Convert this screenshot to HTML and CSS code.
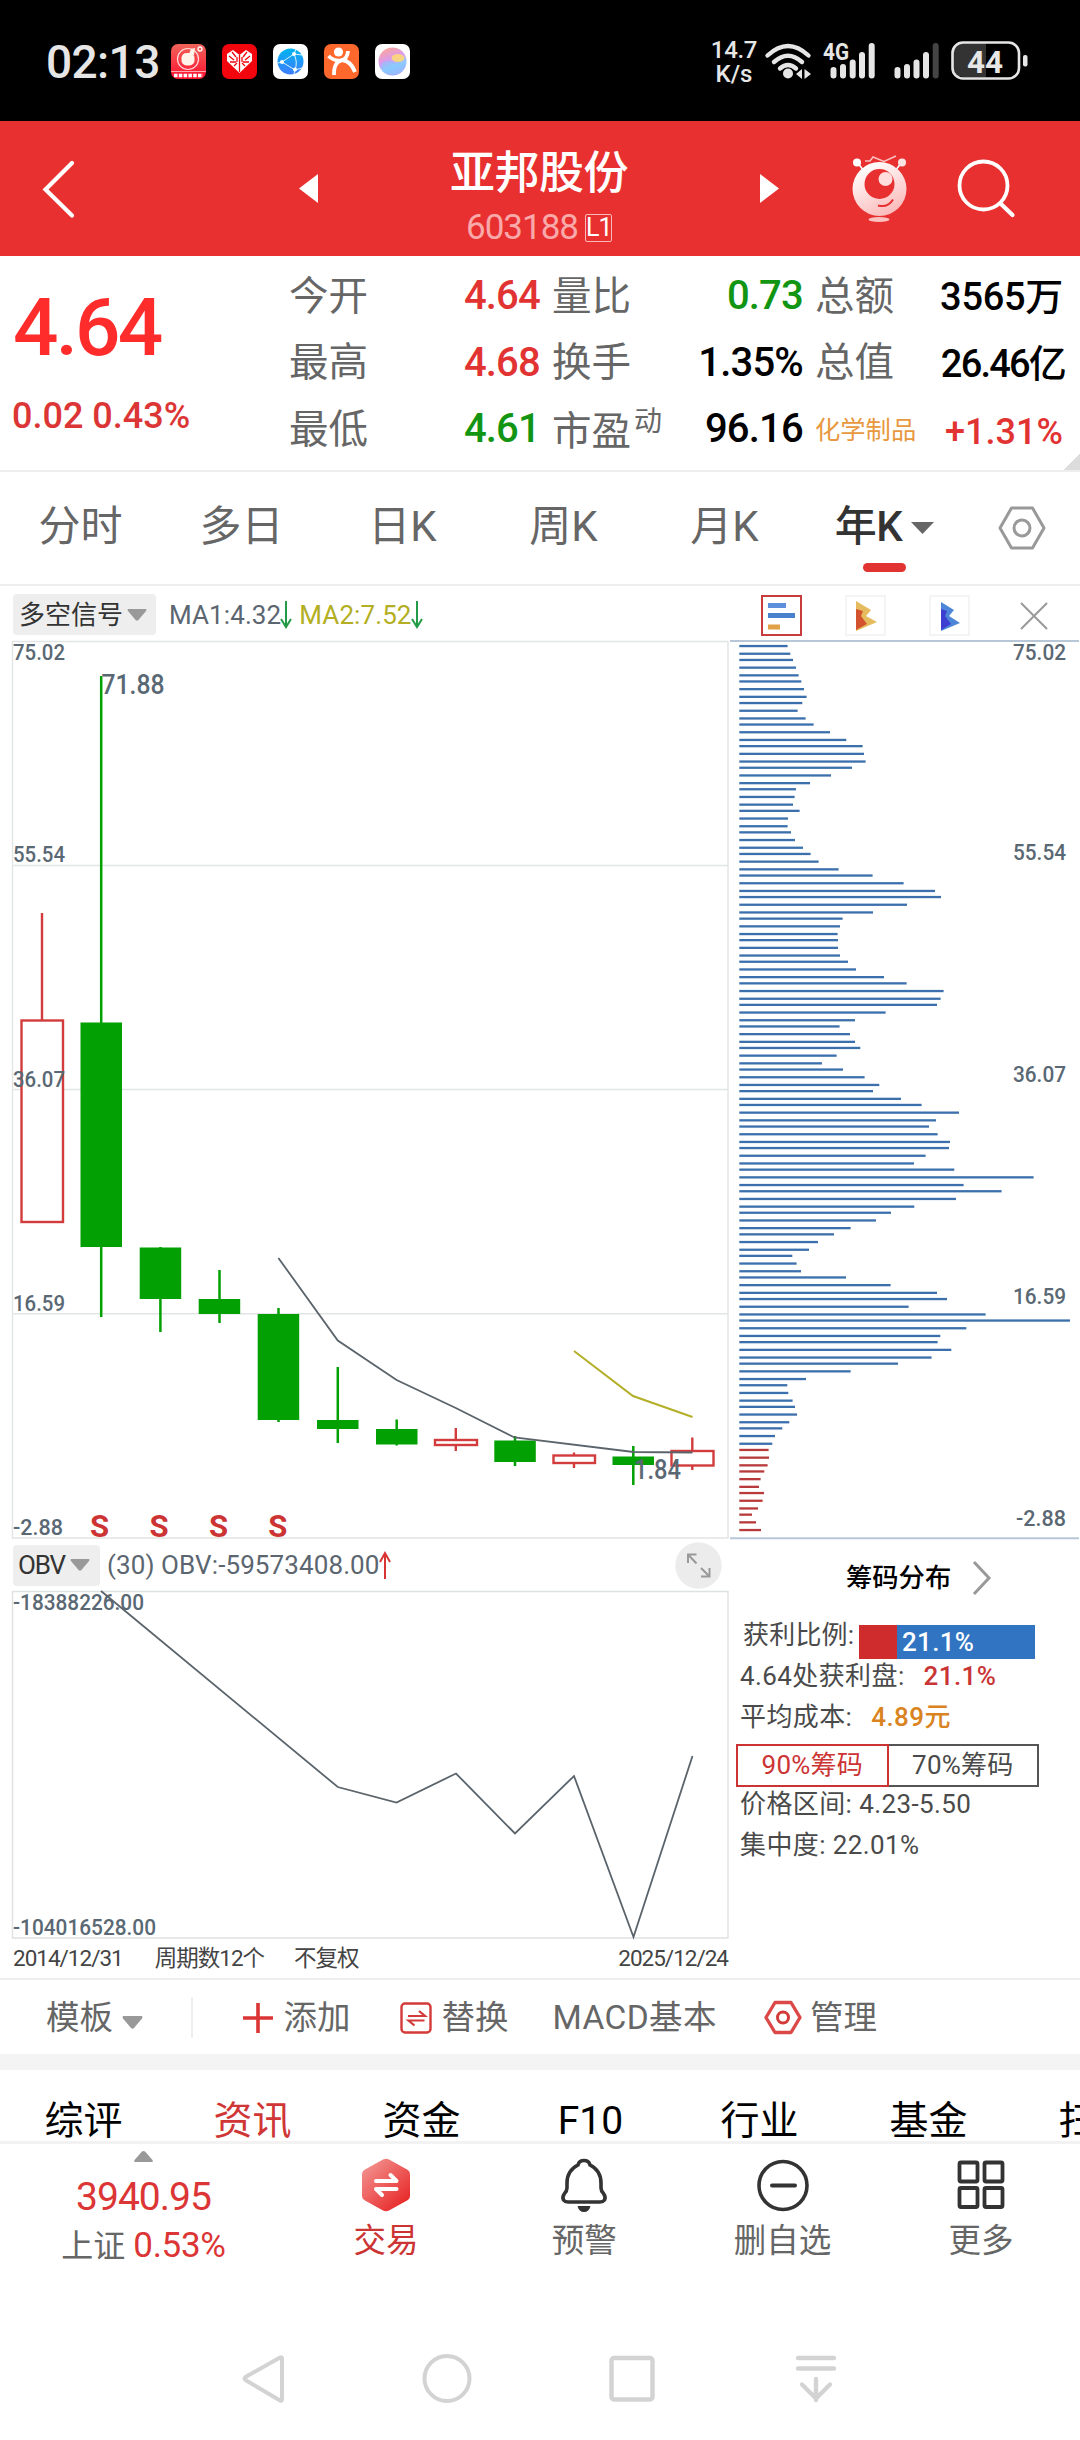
FILE: index.html
```html
<!DOCTYPE html>
<html lang="zh-CN">
<head>
<meta charset="utf-8">
<title>亚邦股份 603188</title>
<link rel="stylesheet" href="styles.css">
</head>
<body>
<div class="screen">
  <header class="status">
    <span class="clock">02:13</span>
    <div class="apps">
      <svg width="35" height="35" viewBox="0 0 35 35"><defs><linearGradient id="ga" x1="0" y1="0" x2="0" y2="1"><stop offset="0" stop-color="#f0635a"/><stop offset="1" stop-color="#ff1230"/></linearGradient></defs><rect width="35" height="35" rx="7" fill="url(#ga)"/><circle cx="17" cy="15" r="10.5" fill="none" stroke="#fff" stroke-width="1.2" opacity=".8"/><rect x="10.500" y="9" width="13" height="12.500" rx="5" fill="#fff3ea"/><path d="M18 10l2-5 4-1-1 7z" fill="#fff3ea"/><circle cx="29" cy="5" r="2" fill="none" stroke="#fff" stroke-width="1.300"/><path d="M0 27.500h35" stroke="#fff" opacity=".6"/><path d="M3 31.500h29" stroke="#fff" stroke-width="3.400" stroke-dasharray="3.500 1.300"/></svg>
      <svg width="35" height="35" viewBox="0 0 35 35"><rect width="35" height="35" rx="7" fill="#f2050d"/><path d="M17.500 29L5 17V10l6-4 6.500 5L24 6l6 4v7z" fill="#fff"/><path d="M17.500 11v17M7 12l5 4M28 12l-5 4M10 8l4 5M25 8l-4 5M8 18l6 0M27 18h-6M12 22l3-3M23 22l-3-3M15 13v5M20 13v5" stroke="#f2050d" stroke-width="1.300"/></svg>
      <svg width="35" height="35" viewBox="0 0 35 35"><defs><linearGradient id="gb" x1="0" y1="0" x2="0" y2="1"><stop offset="0" stop-color="#00b4ef"/><stop offset="1" stop-color="#3f7dff"/></linearGradient></defs><rect width="35" height="35" rx="7" fill="#fff"/><circle cx="17.500" cy="17.500" r="13" fill="url(#gb)"/><path d="M21 10L9 18l13 8M21 10q4 8 1 16M21 10l2-5M21 10l8 1M9 18l-4 1M22 26l-1 4M22 26l7-2" stroke="#d6f4ff" fill="none"/><g fill="#fff"><circle cx="21" cy="10" r="2"/><circle cx="9" cy="18" r="2"/><circle cx="22" cy="25.500" r="2"/></g></svg>
      <svg width="35" height="35" viewBox="0 0 35 35"><rect width="35" height="35" rx="7" fill="#ff682c"/><circle cx="14.500" cy="8" r="4.600" fill="#fff"/><path d="M4.500 12q5 5 12 4.500 7-1 7.500-9.500M10 31q-.5-9 4-13l4-2q9 1 13 12" fill="none" stroke="#fff" stroke-width="3.800"/></svg>
      <svg width="35" height="35" viewBox="0 0 35 35"><defs><linearGradient id="gc" x1=".2" y1="0" x2=".6" y2="1"><stop offset="0" stop-color="#ffa892"/><stop offset=".45" stop-color="#d99af0"/><stop offset=".7" stop-color="#8ecbff"/><stop offset="1" stop-color="#b0a8ff"/></linearGradient></defs><rect width="35" height="35" rx="7" fill="#fff"/><circle cx="17.500" cy="17.500" r="14" fill="url(#gc)"/><ellipse cx="23" cy="14" rx="6.500" ry="4" fill="#ffdc6e" opacity=".85"/><path d="M6 20q6-6 13-1 6 3 11 0-1 11-12 12Q9 30 6 20z" fill="#83c9fb" opacity=".5"/></svg>
    </div>
    <div class="signals">
      <div class="speed"><span>14.7</span><span>K/s</span></div>
      <svg class="radio" width="320" height="50" viewBox="760 36 320 50">
        <g fill="none" stroke="#e6e6e6" stroke-width="4.400" stroke-linecap="round"><path d="M767.500 55.500q20.500-19 41 0M774 62q14-12.500 28 0M780 68.500q8-7 16 0"/></g>
        <circle cx="788" cy="73.500" r="5" fill="#e6e6e6"/><path d="M796 74l6-5v10zM804.500 69l6.500 5-6.500 5z" fill="#e6e6e6"/>
        <text class="net" x="823" y="60" textLength="26" lengthAdjust="spacingAndGlyphs">4G</text>
        <path d="M833.500 70v5.500M843 67v8.500M852.700 62.500v13M862 55v20.500M871.700 46v29.500M897.500 70v5.500M907 67v8.500M916.500 62.500v13M926 55v20.500" stroke="#e6e6e6" stroke-width="6" stroke-linecap="round"/>
        <path d="M935.700 46v29.500" stroke="#444" stroke-width="6" stroke-linecap="round"/>
        <path d="M986 43h-23a10 10 0 0 0-10 10v14a10 10 0 0 0 10 10h23z" fill="#333"/>
        <rect x="952.500" y="42.500" width="66.500" height="36" rx="10.500" fill="none" stroke="#e6e6e6" stroke-width="2.600"/>
        <rect x="1023" y="55" width="4.500" height="11.500" rx="2" fill="#e6e6e6"/>
        <text class="level" x="967" y="72.500" textLength="36" lengthAdjust="spacingAndGlyphs">44</text>
      </svg>
    </div>
  </header>

  <div class="titlebar">
    <svg class="back" width="32" height="60" viewBox="0 0 32 60"><path d="M29 4L2.500 30.500 29 56.500" fill="none" stroke="#fff" stroke-width="4.200" stroke-linecap="round"/></svg>
    <svg class="prev" width="19" height="29" viewBox="0 0 19 29"><path d="M19 0v29L0 14.500z" fill="#fff"/></svg>
    <div class="stock">
      <h1>亚邦股份</h1>
      <div class="code"><span>603188</span><i>L1</i></div>
    </div>
    <svg class="next" width="19" height="29" viewBox="0 0 19 29"><path d="M0 0v29l19-14.500z" fill="#fff"/></svg>
    <svg class="mascot" width="56" height="70" viewBox="852 154 56 70"><defs><linearGradient id="gm" x1=".3" y1="0" x2=".8" y2="1"><stop offset="0" stop-color="#fff"/><stop offset="1" stop-color="#fbb5b5"/></linearGradient></defs><path d="M865 161h5l3-4 11 4.500 12-5.500" fill="none" stroke="#fbc0c0" stroke-width="1.500"/><path d="M857 162l7 9M902 162l-7 9" stroke="#fff" stroke-width="1.600"/><circle cx="857" cy="162.500" r="4" fill="#fff"/><circle cx="902" cy="162.500" r="4" fill="#fde4e4"/><circle cx="879.500" cy="189" r="27" fill="url(#gm)"/><circle cx="879.500" cy="184" r="15" fill="#e83030"/><circle cx="885.500" cy="179" r="7" fill="#fdd"/><path d="M878 205.500q10 2.500 15-6" fill="none" stroke="#e83030" stroke-width="2"/><ellipse cx="879" cy="219.500" rx="10.500" ry="2.600" fill="#fbc0c0"/></svg>
    <svg class="search" width="60" height="62" viewBox="956 158 60 62"><circle cx="983.500" cy="185.500" r="24" fill="none" stroke="#fff" stroke-width="3.800"/><path d="M1000.500 203.500l12 11.500" stroke="#fff" stroke-width="4.200" stroke-linecap="round"/></svg>
  </div>

  <section class="quote">
    <div class="last">
      <div class="price">4.64</div>
      <div class="change">0.02 0.43%</div>
    </div>
    <dl class="facts">
      <div><dt>今开</dt><dd class="up">4.64</dd></div>
      <div><dt>最高</dt><dd class="up">4.68</dd></div>
      <div><dt>最低</dt><dd class="down">4.61</dd></div>
    </dl>
    <dl class="facts">
      <div><dt>量比</dt><dd class="down">0.73</dd></div>
      <div><dt>换手</dt><dd>1.35%</dd></div>
      <div><dt>市盈<sup>动</sup></dt><dd>96.16</dd></div>
    </dl>
    <dl class="facts amounts">
      <div><dt>总额</dt><dd>3565万</dd></div>
      <div><dt>总值</dt><dd class="cap">26.46亿</dd></div>
      <div><dt class="sector">化学制品</dt><dd class="up small">+1.31%</dd></div>
    </dl>
    <div class="corner"></div>
  </section>

  <nav class="periods">
    <span>分时</span><span>多日</span><span>日K</span><span>周K</span><span>月K</span>
    <span class="on">年K<svg width="23" height="12" viewBox="0 0 23 12"><path d="M0 0h23L11.500 12z" fill="#666"/></svg></span>
    <svg class="gear" width="48" height="44" viewBox="0 0 48 44"><path d="M13.500 2h21L46 22 34.500 42h-21L2 22z" fill="none" stroke="#999" stroke-width="3" stroke-linejoin="round"/><circle cx="24" cy="22" r="8" fill="none" stroke="#999" stroke-width="3"/></svg>
  </nav>

  <div class="signalbar">
    <span class="pick">多空信号<svg width="20" height="12" viewBox="0 0 20 12"><path d="M1 0h18q1 1 0 2l-8 9.500h-2L1 2Q0 1 1 0z" fill="#999"/></svg></span>
    <span class="ma one">MA1:4.32</span><svg class="dn" width="12" height="27" viewBox="0 0 12 27"><path d="M6 0v26M1 18l5 8 5-8" fill="none" stroke="#239a46" stroke-width="2"/></svg>
    <span class="ma two">MA2:7.52</span><svg class="dn" width="12" height="27" viewBox="0 0 12 27"><path d="M6 0v26M1 18l5 8 5-8" fill="none" stroke="#239a46" stroke-width="2"/></svg>
    <div class="modes">
      <svg width="41" height="41" viewBox="0 0 41 41"><rect x="1" y="1" width="39" height="39" fill="#fff" stroke="#c93c3c" stroke-width="2"/><path d="M7 10.500h18" stroke="#5d8fdc" stroke-width="5"/><path d="M7 20.500h27" stroke="#4a80cc" stroke-width="5"/><path d="M7 32h12" stroke="#e0a046" stroke-width="5"/></svg>
      <svg width="41" height="41" viewBox="0 0 41 41"><rect x="1" y="1" width="39" height="39" fill="#fff" stroke="#f4f4f4" stroke-width="2"/><path d="M11 6l15 9-5 6 11 6-21 9z" fill="#e5bb5d"/><path d="M11 14l7 2-2 5 6 8-11 6z" fill="#d3532f"/></svg>
      <svg width="41" height="41" viewBox="0 0 41 41"><rect x="1" y="1" width="39" height="39" fill="#fff" stroke="#f4f4f4" stroke-width="2"/><path d="M12 7l13 8-5 6 11 7-19 8z" fill="#4d86d9"/><path d="M12 14l6 2-2 5 6 8-10 6z" fill="#3d3fd0"/></svg>
      <svg class="close" width="30" height="28" viewBox="0 0 30 28"><path d="M2 1l26 26M28 1L2 27" stroke="#999" stroke-width="2"/></svg>
    </div>
  </div>

  <main class="charts">
    <div class="left">
      <svg class="kline" width="729" height="900" viewBox="0 640 729 900">
        <path d="M12.500 641.500H728V1538H12.500zM12.500 865.500H728M12.500 1089.500H728M12.500 1313.700H728" fill="none" stroke="#e2e5e5" stroke-width="1.400"/>
        <g stroke="#d23c3c" stroke-width="2.400" fill="#fff">
          <path d="M42 913v108M455.800 1428v23M574 1452.500v15.500M692.300 1437.500v32.500"/>
          <rect x="21.500" y="1020.500" width="41.500" height="201.500"/><rect x="435" y="1440" width="42" height="5"/><rect x="553.500" y="1455.500" width="41.500" height="7.500"/><rect x="671.500" y="1451" width="42" height="14.500"/>
        </g>
        <path d="M101.200 676v641M160.400 1247v85M219.500 1270v53M278.500 1308v114M337.800 1367v76M396.700 1419.500v26M515 1436v30M633.300 1446v39" stroke="#02a002" stroke-width="2.500"/>
        <path d="M80.500 1022.500H122v224.500H80.500zM139.700 1247.500h41.500v51.500h-41.500zM198.700 1299h41.500v15h-41.500zM257.700 1314h41.500v106h-41.500zM317 1420h41.500v9H317zM376 1429h41.500v15.500H376zM494.300 1440.500h41.500v21.500h-41.500zM612.500 1456.500H654v8.500h-41.500z" fill="#02a002"/>
        <path d="M278.400 1258l59.400 82.500 58.800 39.500 59.200 28 58.700 29.500 119 14.500 59 .5" fill="none" stroke="#5b646b" stroke-width="1.800"/>
        <path d="M574 1351l59 45 59.500 21" fill="none" stroke="#b4af28" stroke-width="2"/>
        <g class="tick">
          <text x="13" y="660" textLength="52" lengthAdjust="spacingAndGlyphs">75.02</text><text x="13" y="861.500" textLength="52" lengthAdjust="spacingAndGlyphs">55.54</text><text x="13" y="1086.500" textLength="52" lengthAdjust="spacingAndGlyphs">36.07</text><text x="13" y="1311" textLength="52" lengthAdjust="spacingAndGlyphs">16.59</text><text x="13" y="1535" textLength="50" lengthAdjust="spacingAndGlyphs">-2.88</text>
        </g>
        <g class="mark"><text x="101.500" y="694" textLength="63" lengthAdjust="spacingAndGlyphs">71.88</text><text x="634" y="1479" textLength="47" lengthAdjust="spacingAndGlyphs">1.84</text></g>
        <g class="sell"><text x="99.600" y="1536.500">S</text><text x="159" y="1536.500">S</text><text x="218.600" y="1536.500">S</text><text x="277.800" y="1536.500">S</text></g>
      </svg>
      <div class="obvbar">
        <span class="pick">OBV<svg width="20" height="12" viewBox="0 0 20 12"><path d="M1 0h18q1 1 0 2l-8 9.500h-2L1 2Q0 1 1 0z" fill="#999"/></svg></span>
        <span class="ma one">(30) OBV:-59573408.00</span><svg class="dn" width="12" height="27" viewBox="0 0 12 27"><path d="M6 27V1M1 10l5-9 5 9" fill="none" stroke="#d93434" stroke-width="2"/></svg>
        <svg class="expand" width="47" height="47" viewBox="0 0 47 47"><circle cx="23.500" cy="23.500" r="23.200" fill="#ececec"/><path d="M13 21v-8.500h8.500M13 12.500l8.500 9M34.500 26v8.500H26M34.500 34.500L26 26" fill="none" stroke="#999" stroke-width="2"/></svg>
      </div>
      <svg class="obv" width="729" height="349" viewBox="0 1590 729 349">
        <path d="M12.500 1591.500H728V1938H12.500z" fill="none" stroke="#dfe2e2" stroke-width="1.400"/>
        <g class="tick"><text x="13" y="1610" textLength="131" lengthAdjust="spacingAndGlyphs">-18388226.00</text><text x="13" y="1935" textLength="143" lengthAdjust="spacingAndGlyphs">-104016528.00</text></g>
        <path d="M101 1591l236.800 196 58.700 15.500 59.500-29 59 60 59-57.500 59.500 161L692.500 1756" fill="none" stroke="#5b646b" stroke-width="1.800"/>
      </svg>
      <div class="range"><span>2014/12/31</span><span class="cycles">周期数12个</span><span class="adj">不复权</span><span class="end">2025/12/24</span></div>
    </div>
    <div class="right">
      <svg class="chips" width="351" height="900" viewBox="729 640 351 900">
        <path d="M730 641h349M730 1538.300h349" stroke="#b8c7d8" stroke-width="2"/>
        <g id="bars"></g>
        <g class="tick"><text x="1013" y="660" textLength="53" lengthAdjust="spacingAndGlyphs">75.02</text><text x="1013" y="860" textLength="53" lengthAdjust="spacingAndGlyphs">55.54</text><text x="1013" y="1081.500" textLength="53" lengthAdjust="spacingAndGlyphs">36.07</text><text x="1013" y="1303.500" textLength="53" lengthAdjust="spacingAndGlyphs">16.59</text><text x="1016" y="1525.500" textLength="50" lengthAdjust="spacingAndGlyphs">-2.88</text></g>
      </svg>
      <div class="dist">
        <h2>筹码分布<svg width="19" height="34" viewBox="0 0 19 34"><path d="M2 1l15 16L2 33" fill="none" stroke="#999" stroke-width="3"/></svg></h2>
        <div class="ratio"><span>获利比例:</span><b><i></i>21.1%</b></div>
        <p>4.64处获利盘:<em class="red">21.1%</em></p>
        <p>平均成本:<em class="gold">4.89元</em></p>
        <div class="toggle"><span class="sel">90%筹码</span><span>70%筹码</span></div>
        <p class="tight">价格区间: 4.23-5.50</p>
        <p>集中度: 22.01%</p>
      </div>
    </div>
  </main>

  <div class="tools">
    <span class="tpl">模板<svg width="21" height="13" viewBox="0 0 21 13"><path d="M1 0h19q1 1 0 2.500L12 12q-1.500 1.500-3 0L1 2.500Q0 1 1 0z" fill="#999"/></svg></span>
    <span class="sep"></span>
    <span class="tool t1"><svg width="32" height="32" viewBox="0 0 32 32"><path d="M16 1v30M1 16h30" stroke="#dc3535" stroke-width="3.600"/></svg>添加</span>
    <span class="tool t2"><svg width="32" height="32" viewBox="0 0 32 32"><rect x="1.500" y="1.500" width="29" height="29" rx="3.500" fill="none" stroke="#d33a3a" stroke-width="2.400"/><path d="M8 14h17l-6-5M24.500 18.500h-16l6 5" fill="none" stroke="#d33a3a" stroke-width="2.200"/></svg>替换</span>
    <span class="tool t3">MACD基本</span>
    <span class="tool t4"><svg width="38" height="35" viewBox="0 0 38 35"><path d="M11 2.500h16l9 15-9 15H11l-9-15z" fill="none" stroke="#dc4848" stroke-width="3.400" stroke-linejoin="round"/><circle cx="19" cy="17.500" r="5.500" fill="none" stroke="#d33a3a" stroke-width="3"/></svg>管理</span>
  </div>

  <nav class="topics"><span>综评</span><span class="on">资讯</span><span>资金</span><span>F10</span><span>行业</span><span>基金</span><span>扫雷</span></nav>

  <footer class="actions">
    <div class="index">
      <svg width="19" height="11" viewBox="0 0 19 11"><path d="M9.500 0q1 0 2 1l7 8q1 2-1 2h-16q-2 0-1-2l7-8q1-1 2-1z" fill="#999"/></svg>
      <strong>3940.95</strong>
      <p>上证 <em>0.53%</em></p>
    </div>
    <div class="act trade"><svg width="54" height="54" viewBox="0 0 54 54"><defs><linearGradient id="gt" x1=".1" y1=".1" x2=".8" y2=".9"><stop offset="0" stop-color="#f2908d"/><stop offset="1" stop-color="#e82c2c"/></linearGradient></defs><path d="M24 1.500q3-1.500 6 0l18 10q3 1.700 3 5v21q0 3.300-3 5l-18 10q-3 1.500-6 0l-18-10q-3-1.700-3-5v-21q0-3.300 3-5z" fill="url(#gt)"/><path d="M17 23h20.500l-6-6M37.500 31H17l6 6" fill="none" stroke="#fff" stroke-width="4" stroke-linecap="round" stroke-linejoin="round"/></svg><span>交易</span></div>
    <div class="act"><svg width="54" height="54" viewBox="0 0 54 54"><path d="M27 2.500q-5 0-6 4.500C13 11 10 18 10 25v5q0 3-2.500 5.500Q5 39 6.500 42q1.500 2 4.500 2h32q3 0 4.500-2 1.500-3-1-6.500Q44 33 44 30v-5c0-7-3-14-11-18q-1-4.500-6-4.500z" fill="none" stroke="#333" stroke-width="3.600"/><path d="M20.500 48h13q-1.500 6-6.500 6t-6.500-6z" fill="#333"/></svg><span>预警</span></div>
    <div class="act"><svg width="54" height="54" viewBox="0 0 54 54"><circle cx="27" cy="27.500" r="24" fill="none" stroke="#333" stroke-width="3.600"/><path d="M16 27.500h23" stroke="#333" stroke-width="4" stroke-linecap="round"/></svg><span>删自选</span></div>
    <div class="act"><svg width="54" height="54" viewBox="0 0 54 54"><g fill="none" stroke="#333" stroke-width="3.800"><rect x="5.500" y="4.500" width="18" height="19" rx="1.500"/><rect x="30.500" y="4.500" width="18" height="19" rx="1.500"/><rect x="5.500" y="30" width="18" height="19" rx="1.500"/><rect x="30.500" y="30" width="18" height="19" rx="1.500"/></g></svg><span>更多</span></div>
  </footer>

  <div class="sysnav">
    <svg width="44" height="52" viewBox="0 0 44 52"><path d="M39 4.500q2-1 2 1.500v40q0 2.500-2 1.500L4.500 27q-2-1.500 0-3z" fill="none" stroke="#d3d3d3" stroke-width="4"/></svg>
    <svg width="50" height="52" viewBox="0 0 50 52"><circle cx="25" cy="25.500" r="22.500" fill="none" stroke="#d3d3d3" stroke-width="4"/></svg>
    <svg width="46" height="52" viewBox="0 0 46 52"><rect x="2.500" y="5" width="41" height="41.500" rx="2.500" fill="none" stroke="#d3d3d3" stroke-width="4.400"/></svg>
    <svg width="42" height="52" viewBox="0 0 42 52"><path d="M3 5h36M3 15.500h36M21 26v21M7 31.500l14 14 14-14" fill="none" stroke="#d3d3d3" stroke-width="4.400" stroke-linecap="round"/></svg>
  </div>
</div>
<script src="chips.js"></script>
</body>
</html>
```
FILE: styles.css
```css
* { box-sizing: border-box; margin: 0; padding: 0; }
body { background: #fff; }
svg { display: block; flex: none; overflow: visible; }
em, i { font-style: normal; }
.screen {
  width: 1080px; height: 2440px; overflow: hidden; background: #fff;
  display: flex; flex-direction: column;
  font-family: Roboto, "Noto Sans CJK SC", sans-serif; color: #000; white-space: nowrap;
}
.screen > * { flex: none; }

.status { height: 121px; background: #000; color: #e6e6e6; display: flex; align-items: center; padding-left: 46px; }
.clock { width: 125px; font-size: 46px; line-height: 50px; font-weight: 500; letter-spacing: -.6px; padding-top: 3px; }
.apps { display: flex; gap: 16px; padding-top: 2px; }
.signals { margin-left: auto; display: flex; align-items: center; }
.speed { width: 52px; display: flex; flex-direction: column; align-items: center; font-size: 24px; line-height: 24px; font-weight: 500; padding-top: 3px; }
.speed span:first-child { letter-spacing: -.3px; }
.radio { margin-top: 1px; }
.radio text { fill: #e6e6e6; font-weight: 700; }
.radio .net { font-size: 24px; }
.radio .level { font-size: 32px; }

.titlebar { height: 135px; background: #e83030; display: flex; align-items: center; }
.back { margin-left: 43px; }
.prev { margin-left: 224px; }
.stock { width: 442px; display: flex; flex-direction: column; align-items: center; color: #fff; padding-top: 14px; }
.stock h1 { font-size: 45px; line-height: 52px; font-weight: 500; letter-spacing: -.5px; }
.code { display: flex; align-items: center; gap: 7px; height: 30px; margin-top: 13px; font-size: 35px; line-height: 30px; color: #f9a9a9; }
.code span { letter-spacing: -1px; }
.code i { width: 27px; height: 28px; border: 1.5px solid #f9b9b9; border-radius: 2px; color: #fff; font-size: 25px; line-height: 26px; text-align: center; letter-spacing: -1px; }
.mascot { margin-left: 73px; }
.search { margin-left: 48px; }

.quote { position: relative; height: 216px; border-bottom: 2px solid #eee; display: flex; }
.last { width: 289px; padding: 30px 0 0 12px; }
.price { font-size: 80px; line-height: 84px; font-weight: 500; color: #ff2c2c; letter-spacing: -2.8px; padding-left: 1px; }
.change { font-size: 36px; line-height: 40px; margin-top: 26px; color: #dc3535; font-weight: 500; }
.facts { width: 263px; padding: 7px 12px 0 0; }
.facts div { display: flex; justify-content: space-between; align-items: center; height: 66.6px; }
.facts dt { font-size: 39.5px; line-height: 40px; color: #666; padding-top: 1px; }
.facts dd { font-size: 40px; line-height: 40px; font-weight: 500; letter-spacing: -.8px; }
.facts sup { font-size: 28px; line-height: 28px; vertical-align: 14px; margin-left: 3px; }
.amounts { width: 248px; padding-right: 0; }
.amounts dd { font-size: 38px; padding-top: 2px; letter-spacing: -.3px; }
.amounts dd.cap { letter-spacing: -1.8px; margin-right: -2px; }
.amounts dt.sector { font-size: 25.3px; color: #e8983f; padding-top: 4px; }
.amounts dd.small { font-size: 36px; padding-top: 6px; letter-spacing: 0; }
.up { color: #e23333; }
.down { color: #129512; }
.corner { position: absolute; right: 0; bottom: 0; width: 17px; height: 17px; background: linear-gradient(135deg, transparent 50%, #dcdcdc 50%); }

.periods { height: 114px; border-bottom: 2px solid #eee; display: flex; align-items: center; font-size: 42px; line-height: 50px; color: #666; padding-bottom: 3px; }
.periods span { width: 161px; text-align: center; }
.periods .on { position: relative; display: flex; align-items: center; justify-content: center; gap: 9px; color: #333; font-weight: 500; letter-spacing: -.5px; padding-right: 2px; }
.periods .on svg { margin-top: 3px; }
.periods .on::after { content: ""; position: absolute; left: 58px; top: 61px; width: 43px; height: 9px; border-radius: 5px; background: #e23333; }
.gear { margin: 3px 0 0 32px; }

.signalbar { height: 54px; display: flex; align-items: center; padding-left: 13px; padding-top: 3px; }
.pick { height: 41px; display: flex; align-items: center; gap: 4px; background: #eee; border-radius: 4px; color: #333; font-size: 26px; line-height: 40px; padding-left: 6px; }
.signalbar .pick { width: 143px; margin-right: 13px; }
.ma { font-size: 26px; line-height: 40px; letter-spacing: .1px; }
.one { color: #5b6670; }
.two { color: #b3ae22; margin-left: 7px; }
.dn { margin-left: -1px; }
.modes { margin-left: auto; display: flex; align-items: center; width: 319px; gap: 43px; padding-top: 2px; }
.close { margin-left: 6px; }

.charts { height: 1340px; border-bottom: 2px solid #eee; display: flex; }
.left { width: 729px; }
.right { width: 351px; }
.tick text { font-size: 22.5px; fill: #5a6874; font-weight: 500; }
.mark text { font-size: 27px; fill: #5a6874; font-weight: 500; }
.sell text { font-size: 31px; font-weight: 700; fill: #cc3434; text-anchor: middle; }
.obvbar { height: 50px; display: flex; align-items: center; padding: 0 7px 0 13px; }
.obvbar .pick { width: 87px; margin-right: 7px; letter-spacing: -1.2px; gap: 5px; padding-left: 5px; }
.obvbar .ma { letter-spacing: .1px; }
.expand { margin-left: auto; }
.range { height: 37px; display: flex; align-items: center; padding: 0 1px 0 13px; font-size: 22.500px; line-height: 30px; color: #444; letter-spacing: -1px; }
.cycles { margin-left: 32px; }
.adj { margin-left: 30px; }
.range .end { margin-left: auto; }

.dist { font-size: 26px; color: #4a4a4a; padding-left: 11px; }
.dist h2 { height: 76px; display: flex; align-items: center; gap: 21px; margin-left: 106px; font-size: 26.3px; line-height: 40px; font-weight: 500; color: #000; }
.ratio { height: 43px; display: flex; align-items: flex-end; line-height: 34px; }
.ratio span { width: 119px; padding-left: 3px; line-height: 48px; letter-spacing: .2px; }
.ratio b { width: 176px; height: 34px; display: flex; align-items: center; background: #3074c2; color: #fff; font-weight: 500; line-height: 26px; letter-spacing: .3px; }
.ratio i { width: 38px; height: 34px; background: #cf2d2d; margin-right: 5px; }
.dist p { height: 41px; line-height: 41px; letter-spacing: .4px; }
.ratio + p { margin-top: -3px; }
.dist em { margin-left: 19px; font-weight: 500; }
.dist .gold { color: #d98420; }
.dist .red { color: #c93434; }
.toggle { display: flex; width: 303px; height: 43px; margin: 6px 0 0 -4px; }
.toggle span { flex: 1; border: 2px solid #555; border-left: 0; text-align: center; line-height: 38px; letter-spacing: .2px; }
.toggle .sel { border: 2px solid #cc3434; color: #cc3434; }
.dist .tight { margin-top: -3px; }

.tools { height: 74px; display: flex; align-items: center; font-size: 33.500px; line-height: 40px; color: #666; padding-left: 46px; padding-top: 1px; }
.tpl { width: 145px; display: flex; align-items: center; gap: 9px; }
.tpl svg { margin-top: 9px; }
.sep { width: 1.500px; height: 41px; background: #eee; }
.tool { display: flex; align-items: center; gap: 10px; }
.t1 { margin-left: 49px; } .t2 { margin-left: 49px; } .t3 { margin-left: 44px; letter-spacing: .4px; } .t4 { margin-left: 47px; gap: 8px; }

.topics { height: 87px; border-top: 16px solid #f4f4f4; overflow: hidden; display: flex; font-size: 39px; line-height: 40px; padding: 31px 0 0 0; }
.topics span { flex: none; width: 169px; text-align: center; text-indent: -2px; }
.topics .on { color: #d03636; }

.actions { height: 160px; border-top: 3px solid #f2f2f2; display: flex; padding-top: 7px; }
.index { width: 287px; display: flex; flex-direction: column; align-items: center; }
.index strong { font-size: 39px; line-height: 44px; font-weight: 400; color: #dc3535; margin-top: 13px; letter-spacing: -1px; }
.index p { font-size: 32px; line-height: 44px; color: #666; margin-top: 5px; }
.index em { color: #dc3535; font-size: 35px; letter-spacing: -.3px; }
.act { width: 198.300px; display: flex; flex-direction: column; align-items: center; padding-top: 7px; font-size: 32.500px; line-height: 40px; color: #666; }
.act span { margin-top: 9px; }
.trade { color: #cc3434; }

.sysnav { display: flex; padding: 52px 0 0 241px; }
.sysnav svg:nth-child(2) { margin-left: 137px; }
.sysnav svg:nth-child(3) { margin-left: 137px; }
.sysnav svg:nth-child(4) { margin-left: 140px; }
```
FILE: chips.js
```js
// Chip distribution: bar length per price level, from the highest price down.
const held = [145,153,161,170,178,186,194,202,189,175,199,223,272,321,370,374,379,338,275,212,170,166,161,181,146,145,155,167,191,214,238,298,400,493,587,605,503,401,310,302,295,296,296,302,326,350,434,502,613,604,593,439,347,301,332,347,363,292,248,311,376,420,401,485,547,659,590,569,595,632,629,559,524,645,883,673,787,650,525,455,410,334,284,236,209,159,172,185,320,454,593,623,508,739,992,681,603,595,636,577,476,334,200,144,147,160,167,173,150,129,107,99,88,89,85,75,64,59,74,70,56,38,50,65];
const firstProfit = 112;
const ns = "http://www.w3.org/2000/svg";
const bars = document.getElementById("bars");
held.forEach((v, i) => {
  const r = document.createElementNS(ns, "rect");
  r.setAttribute("x", 739.3);
  r.setAttribute("y", (644.9 + Math.round(i * 4.664) * 1.54).toFixed(1));
  r.setAttribute("width", (v / 3).toFixed(1));
  r.setAttribute("height", 2.3);
  r.setAttribute("fill", i < firstProfit ? "#3b70ac" : "#b83a3a");
  bars.appendChild(r);
});
```
